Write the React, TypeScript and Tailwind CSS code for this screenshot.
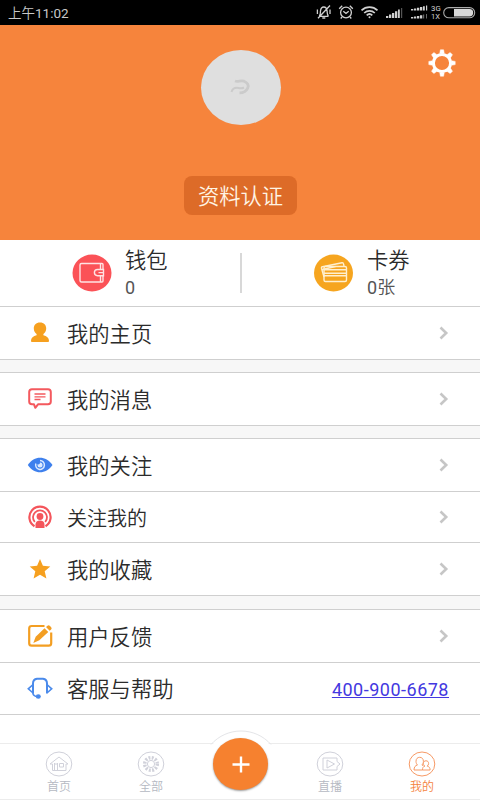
import React from 'react';

const Chevron = () => (
  <svg width="12" height="16" viewBox="0 0 12 16" fill="none" stroke="#c6c6c6" strokeWidth="2.6" className="mr-[30px]">
    <path d="M2.5 2.5 8.2 8l-5.7 5.5" />
  </svg>
);

const StatusIcons = () => (
  <svg width="164" height="25" viewBox="316 0 164 25" fill="none" stroke="#d0d0d0" strokeWidth="1.3">
    {/* muted bell */}
    <path d="M319 16.3h9.5M319.3 16c1.4-1.3 1-3.3 1.2-5 .3-2.7 1.6-4 3.3-4s3 1.3 3.3 4c.2 1.7-.1 3.7 1.3 5M322.3 18h3M330 5.5 318 18.2M317.4 9.5v4.5M330 9.5v4.5" />
    {/* alarm clock */}
    <circle cx="346" cy="12.5" r="5.4" />
    <path d="m343.3 11.2 2.7 2.3 2.7-2.3M339.2 8.8l3-3M352.8 8.8l-3-3M342 17l-1.3 1.5M350 17l1.3 1.5" />
    {/* wifi */}
    <path d="M361.5 10.3c4.6-4.3 11.4-4.3 16 0M364.2 13c3-2.8 7.6-2.8 10.6 0M366.7 15.3c1.6-1.5 4-1.5 5.6 0" strokeWidth="1.7" />
    <circle cx="369.5" cy="17.2" r="1" fill="#d0d0d0" stroke="none" />
    {/* signal */}
    <g stroke="none" fill="#d0d0d0">
      <path d="M386 16h2.3v2H386zM389 14.5h2.3V18H389zM392 13h2.3v5H392zM395 11.3h2.3V18H395zM398 9.5h1.8V18H398z" />
      <path d="M401 8h1.2v10H401z" fill="#555" />
      <path d="M411 9h2.3v1.6H411zM414 8.5h2.3v2.1H414zM417 7.8h2.3v2.8H417zM420 7h2.3v3.6H420zM423 6.2h1.8v4.4H423zM426 5.6h1.2v5H426z" />
      <path d="M411 17h2.3v1.5H411zM414 16.5h2.3v2H414zM417 15.9h2.3v2.6H417zM420 15.2h2.3v3.3H420z" />
      <path d="M423 14.5h1.2v4H423zM426 14h1v4.5h-1z" fill="#666" />
      <text x="431" y="11.3" fontSize="7.8" className="font-['Roboto',sans-serif] font-normal">3G</text>
      <text x="431" y="19.3" fontSize="7.5" className="font-['Roboto',sans-serif] font-normal">1X</text>
    </g>
    {/* battery */}
    <rect x="443.7" y="7.6" width="31" height="10.2" rx="5.1" stroke="#aaa" strokeWidth="1.1" />
    <path d="M454 9h15.5a3.7 3.7 0 0 1 0 7.4H454z" fill="#d8d8d8" stroke="none" />
  </svg>
);

const Gear = () => (
  <svg width="28" height="28" viewBox="-14 -14 28 28" fill="none" stroke="#fff">
    <circle r="8.6" strokeWidth="3" />
    {[0, 45, 90, 135, 180, 225, 270, 315].map((angle) => (
      <path key={angle} d="M-2.3-9.5-1.6-13.2h3.2L2.3-9.5z" fill="#fff" strokeWidth="0.5" strokeLinejoin="round" transform={`rotate(${angle})`} />
    ))}
  </svg>
);

const WalletIcon = () => (
  <svg width="40" height="38" viewBox="0 0 40 38" fill="none" stroke="#ffe3e3" strokeWidth="1.4">
    <ellipse cx="20" cy="19" rx="19.5" ry="18.5" fill="#fb5257" stroke="none" />
    <path d="M31 15.5v-5q0-1-1-1H9.5Q8 9.5 8 11v15.5Q8 28 9.5 28H30q1 0 1-1v-5" />
    <path d="M31.5 15.5h-6a3.1 3.1 0 0 0 0 6.2h6zM28.5 9.5v6M28.5 21.7V28M26.5 18.6h5" />
  </svg>
);

const CardsIcon = () => (
  <svg width="40" height="38" viewBox="0 0 40 38" fill="none" stroke="#fff0cf" strokeWidth="1.4" strokeLinejoin="round">
    <ellipse cx="19.5" cy="19" rx="19.5" ry="18.5" fill="#f6a51f" stroke="none" />
    <path d="M10 23 7.500 14.200q-.3-1.200 1-1.500l19.500-4q1.300-.2 1.500 1l.5 2.300M8.500 15.500l13-3" />
    <rect x="10" y="12.5" width="22.5" height="15" rx="1.5" />
    <path d="M10 15.800h22.500M10 19.300h22.500M10 21.800h22.500" />
  </svg>
);

const UserIcon = () => (
  <svg width="26" height="26" viewBox="0 0 26 26" fill="#f6a01f">
    <path d="M13 2.5c4 0 6.2 2.6 6.2 6 0 2.6-1.2 4.400-2.800 5.600v1.200c3.300.8 5.600 2.700 5.600 5.500 0 .8-.4 1.200-1.200 1.200H5.200c-.8 0-1.200-.4-1.200-1.200 0-2.800 2.300-4.700 5.600-5.500v-1.200C8 12.900 6.800 11.100 6.800 8.500c0-3.400 2.200-6 6.200-6z" />
  </svg>
);

const MessageIcon = () => (
  <svg width="26" height="26" viewBox="0 0 26 26" fill="none" stroke="#f4595e" strokeWidth="2" strokeLinejoin="round">
    <path d="M5 3.200h16q2.800 0 2.800 2.800v9.500q0 2.800-2.800 2.800H11L8.300 21.800 7 18.300H5q-2.800 0-2.800-2.800V6Q2.200 3.200 5 3.200z" />
    <path d="M7.500 8h11M7.500 10.800h11M7.500 13.500h6" strokeWidth="1.300" />
  </svg>
);

const EyeIcon = () => (
  <svg width="26" height="26" viewBox="0 0 26 26" fill="none">
    <path d="M.8 13C4.300 8 8.300 5.800 13 5.800S22 8 25.500 13c-3.500 5-7.800 7.300-12.500 7.300S4.300 18 .8 13z" fill="#3e80ed" />
    <path d="M13 8.600a4.400 4.400 0 1 1-4.100 2.800" stroke="#dceaff" strokeWidth="1.500" />
    <circle cx="13" cy="13" r="2.500" fill="#dceaff" />
    <circle cx="11.300" cy="10.800" r="1.700" fill="#3e80ed" />
  </svg>
);

const FollowersIcon = () => (
  <svg width="26" height="26" viewBox="0 0 26 26" fill="none" stroke="#f4555b" strokeWidth="2.200">
    <path d="M7.500 22.300a10.600 10.600 0 1 1 11 0" />
    <path d="M7.800 18a7 7 0 1 1 10.400 0" strokeWidth="1.800" />
    <circle cx="13" cy="12.500" r="3.400" fill="#f4555b" stroke="none" />
    <path d="M8.500 24v-3.500c0-2.500 1.800-4 4.500-4s4.500 1.500 4.500 4V24z" fill="#f4555b" stroke="none" />
  </svg>
);

const StarIcon = () => (
  <svg width="26" height="26" viewBox="0 0 26 26" fill="#f6a01f">
    <path d="m13 3 2.900 6.800 7.400.6-5.600 4.900 1.700 7.200-6.400-3.800-6.400 3.800 1.700-7.200-5.600-4.900 7.400-.6z" />
  </svg>
);

const FeedbackIcon = () => (
  <svg width="26" height="26" viewBox="0 0 26 26" fill="none" stroke="#f39e22" strokeWidth="2.200">
    <path d="M17.500 3H4.700Q2.200 3 2.200 5.500v14.700q0 2.500 2.500 2.500h17q2.500 0 2.500-2.500V9.500" />
    <path d="m17.500 5.300 3.800 3.600-9 8.300-6 2.700 2.400-6.200z" fill="#f39e22" stroke="none" />
    <path d="m19 4 1.500-1.200q1.200-1 2.500.2l1.200 1.200q1 1.200-.1 2.300L22.700 7.800z" fill="#f39e22" stroke="none" />
  </svg>
);

const HelpIcon = () => (
  <svg width="26" height="26" viewBox="0 0 26 26" fill="none" stroke="#4a8aeb" strokeWidth="2">
    <path d="M6 17.500V7.500q0-4.300 4-4.800h6q4 .5 4 4.800v10" />
    <path d="M5.500 9 1.300 12.800 5.500 16.500M20.500 9l4.200 3.800-4.200 3.700M5.800 16.500q.3 4 5 4.300" strokeWidth="1.600" />
    <ellipse cx="11.300" cy="20.500" rx="2.500" ry="2.200" fill="#4a8aeb" stroke="none" />
  </svg>
);

type RowProps = {
  icon: React.ReactNode;
  label: string;
  size?: string;
  className: string;
  children?: React.ReactNode;
};

const Row = ({ icon, label, size = 'text-[21.300px]', className, children }: RowProps) => (
  <div className={`flex items-center border-[#cfcfcf] bg-white pl-[27px] ${className}`}>
    {icon}
    <span className={`ml-3.5 flex-1 pt-[3px] leading-6 text-[#2b2b2b] ${size}`}>{label}</span>
    {children ?? <Chevron />}
  </div>
);

type TabProps = {
  label: string;
  active?: boolean;
  children: React.ReactNode;
};

const Tab = ({ label, active, children }: TabProps) => (
  <div className={`flex w-[60px] flex-col items-center pt-[7px] ${active ? 'text-[#f79a66]' : 'text-[#d0d1da]'}`}>
    <svg width="28" height="26" viewBox="0 0 28 26" fill="none" stroke="currentColor" strokeWidth="1">
      <ellipse cx="14" cy="13" rx="12.800" ry="12" />
      {children}
    </svg>
    <span className={`mt-[3px] text-[12px] leading-[15px] ${active ? 'text-[#f58340]' : 'text-[#b5b9c2]'}`}>{label}</span>
  </div>
);

const TabBar = () => (
  <nav className="relative mt-auto flex h-[57px] gap-8 border-y border-[#ececec] bg-white pl-[29px]">
    <svg width="64" height="18" viewBox="0 0 64 18" className="absolute -top-[15px] left-[209px]">
      <path d="M2 17C18-2 46-2 62 17z" fill="#fff" />
      <path d="M2 15.500C18-2.500 46-2.500 62 15.500" fill="none" stroke="#e4e5e8" />
    </svg>
    <Tab label="首页">
      <path d="m5 13 9-7 9 7h-2v6.500H7.500V13zM9.500 12v7.500M12.500 12v7.500M9.500 13h3M14.500 12.500h4V16h-4z" />
    </Tab>
    <Tab label="全部">
      <circle cx="14" cy="13" r="3.600" />
      <circle cx="14" cy="13" r="6.300" strokeWidth="3.500" strokeDasharray="1.900 1.400" />
    </Tab>
    <button className="relative -mt-[6px] flex h-[52px] w-[55px] items-center justify-center rounded-[50%] bg-[#f6812f] shadow-[0_1px_2px_rgba(0,0,0,0.4)]">
      <svg width="18" height="18" viewBox="0 0 18 18" stroke="#fff" strokeWidth="2.400">
        <path d="M.5 9.500h17M9 1.500v16" />
      </svg>
    </button>
    <Tab label="直播">
      <path d="M7 7h14v3.500l3 2.500-3 2.500V19H7zM11 9l7.500 4-7.500 4z" />
    </Tab>
    <Tab label="我的" active>
      <path d="M14.500 19H6c0-3 1.300-4.500 3.500-5-1-1-1.500-2-1.500-3.700 0-2.500 1.500-4 3.700-4s3.700 1.500 3.700 4c0 1.700-.6 2.700-1.500 3.700M14.500 19c0-2.200.6-3.400 2.400-3.900-1-.7-1.500-1.500-1.500-2.600 0-1.700 1-2.700 2.600-2.700s2.600 1 2.600 2.700c0 1.100-.5 1.900-1.400 2.600 2 .5 2.900 1.700 2.900 3.900zM13.900 14c.9.200 1.500.6 2 1.300" />
    </Tab>
  </nav>
);

const App = () => (
  <div className="flex h-[800px] w-[480px] flex-col overflow-hidden bg-white font-['Roboto','Noto_Sans_CJK_SC',sans-serif] font-[350]">
    <div className="flex h-[25px] shrink-0 items-center justify-between bg-black pl-2 text-[13.500px] text-[#c8c8c8]">
      <span className="pt-0.5">上午<span className="font-normal">11:02</span></span>
      <StatusIcons />
    </div>

    <header className="flex h-[215px] shrink-0 flex-col items-center bg-[#f6843c] pt-[25px]">
      <div className="flex w-full items-start justify-between">
        <div className="ml-[201px] flex h-[75px] w-20 items-center justify-center rounded-[50%] bg-[#dfdfdf]">
          <svg width="22" height="20" viewBox="0 0 22 20" fill="none" stroke="#cbcbcb" strokeWidth="2.800">
            <path d="M5 3c3 1.200 5.500-.8 9 .2 3.500 1.300 5 4 3.800 6.700-1.300 3-4.300 5-8.300 5" />
            <path d="M1.500 14c1-3.500 4-4.500 7-4 2 .4 4 .3 5.500-.5" strokeWidth="2" />
          </svg>
        </div>
        <div className="-mt-px mr-6">
          <Gear />
        </div>
      </div>
      <div className="mt-[51px] ml-px flex h-[39px] w-[113px] items-center justify-center rounded-lg bg-[#dd6b28] pt-0.5 text-[21.300px] text-[#fff4e4]">资料认证</div>
    </header>

    <div className="flex h-[67px] shrink-0 items-center border-b border-[#cfcfcf]">
      <div className="flex h-10 w-[242px] items-center border-r-2 border-[#d8d8d8] pl-[72px]">
        <WalletIcon />
        <div className="ml-[13px] flex flex-col pt-0.5">
          <span className="text-[21.300px] leading-7 text-[#2b2b2b]">钱包</span>
          <span className="text-[18px] leading-[26px] font-normal text-[#555]">0</span>
        </div>
      </div>
      <div className="flex h-10 items-center pl-[72px]">
        <CardsIcon />
        <div className="ml-[13px] flex flex-col pt-0.5">
          <span className="text-[21.300px] leading-7 text-[#2b2b2b]">卡券</span>
          <span className="text-[18px] leading-[26px] text-[#555]"><span className="font-normal">0</span>张</span>
        </div>
      </div>
    </div>

    <div className="shrink-0 bg-[#f7f7f7]">
      <Row icon={<UserIcon />} label="我的主页" className="h-[53px] border-b" />
      <Row icon={<MessageIcon />} label="我的消息" className="mt-3 h-[54px] border-y" />
      <Row icon={<EyeIcon />} label="我的关注" className="mt-3 h-[54px] border-y" />
      <Row icon={<FollowersIcon />} label="关注我的" size="text-[20px]" className="h-[51px] border-b" />
      <Row icon={<StarIcon />} label="我的收藏" className="h-[53px] border-b" />
      <Row icon={<FeedbackIcon />} label="用户反馈" className="mt-[13px] h-[54px] border-y" />
      <Row icon={<HelpIcon />} label="客服与帮助" className="h-[52px] border-b">
        <a href="tel:400-900-6678" className="mr-[31px] pt-0.5 text-[18px] font-normal tracking-[0.500px] text-[#4338e0] underline">400-900-6678</a>
      </Row>
    </div>

    <TabBar />
  </div>
);

export default App;
